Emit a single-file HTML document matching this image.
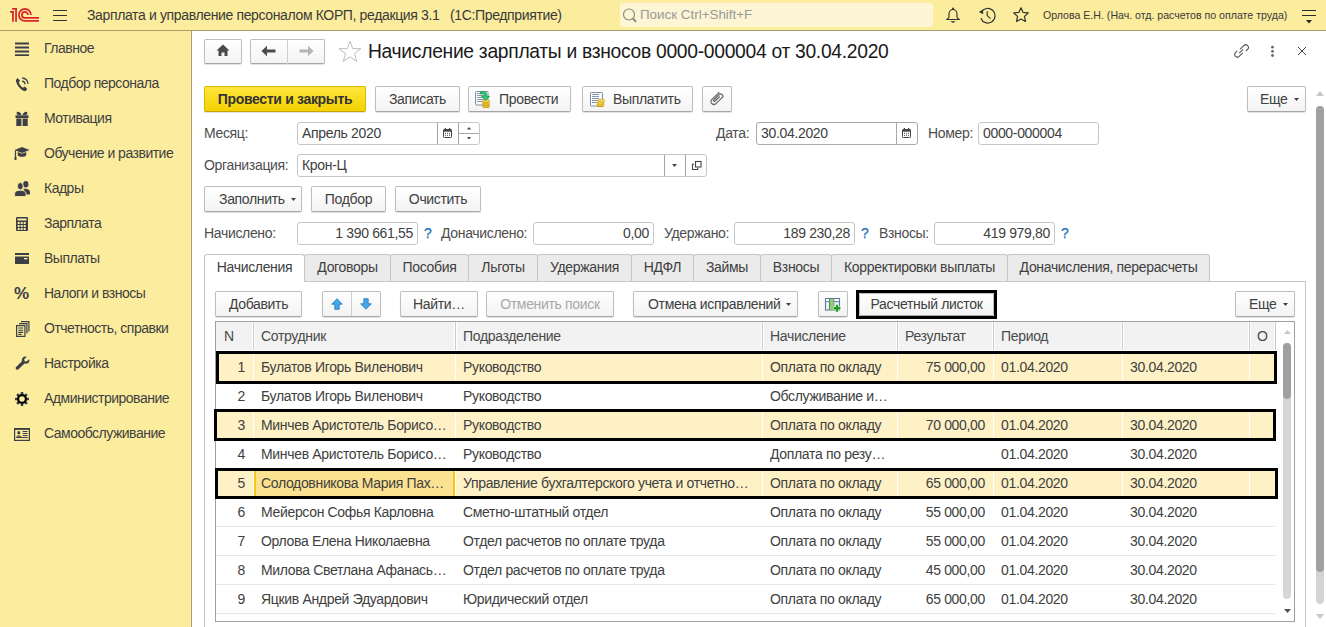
<!DOCTYPE html><html><head><meta charset="utf-8"><title>1C</title><style>
*{margin:0;padding:0;box-sizing:border-box}
html,body{width:1326px;height:627px;overflow:hidden}
body{position:relative;font-family:"Liberation Sans",sans-serif;font-size:14px;letter-spacing:-0.33px;color:#3d3d3d;background:#fff}
.a{position:absolute;white-space:nowrap}
#top{left:0;top:0;width:1326px;height:31px;background:#FBEC9E;border-bottom:1px solid #A89C6A}
#side{left:0;top:31px;width:192px;height:596px;background:#FBEC9E;border-right:1px solid #A89C6A}
#side:after{content:"";position:absolute;right:0;top:0;width:1px;height:100%;background:#FDF2B4}
.si{left:44px;height:20px;line-height:20px;color:#3f3f3f;letter-spacing:-0.5px}
.btn{position:absolute;height:26px;border:1px solid #BEBEBE;border-bottom-color:#A6A6A6;border-radius:2px;background:linear-gradient(#fff,#f3f3f3);box-shadow:0 1px 1px rgba(0,0,0,.12);text-align:center;line-height:24px;color:#404040;white-space:nowrap}
.yb{background:linear-gradient(#FFE63D,#F4D100);border-color:#D9B800;border-bottom-color:#C4A500;font-weight:bold;color:#333}
.inp{position:absolute;height:23px;border:1px solid #C6C6C6;border-radius:3px;background:#fff;line-height:21px;padding:0 4px;color:#404040;white-space:nowrap}
.lbl{position:absolute;height:23px;line-height:23px;color:#4d4d4d;white-space:nowrap}
.q{position:absolute;color:#1C6EBE;font-weight:normal;line-height:23px;font-size:14px;-webkit-text-stroke:0.25px #1C6EBE;letter-spacing:0}
.tab{position:absolute;top:254px;height:27px;border:1px solid #C6C6C6;border-bottom:none;border-radius:3px 3px 0 0;background:#EBEBEB;text-align:center;line-height:24px;color:#404040;white-space:nowrap}
.hd{position:absolute;top:322px;height:29px;line-height:29px;color:#4d4d4d;background:#F2F2F2;border-right:1px solid #DADADA;padding-left:8px;white-space:nowrap}
.cell{position:absolute;height:29px;line-height:29px;color:#404040;white-space:nowrap;overflow:hidden;padding-left:8px}
.r{text-align:right;padding-right:8px;padding-left:0}
.hl{position:absolute;border:3px solid #000}
.sep{position:absolute;height:1px;background:#E8E8E8}
</style></head><body>
<div id="top" class="a"></div>
<svg class="a" style="left:0px;top:0px" width="45" height="30" viewBox="0 0 45 30"><g fill="#D8232A">
<rect x="12.1" y="8" width="4.8" height="1.7"/><rect x="15.2" y="8" width="1.7" height="13.8"/><rect x="12.1" y="11" width="1.7" height="10.8"/><rect x="10" y="11" width="3.8" height="1.7"/></g>
<g fill="none" stroke="#D8232A" stroke-width="1.7">
<path d="M30.9 14.9 A6 6 0 1 0 24.9 20.9 H38.9"/>
<path d="M27.9 14.9 A3 3 0 1 0 24.9 17.9 H38.9"/>
</g></svg>
<div class="a" style="left:53px;top:10px;width:14px;height:1px;background:#333"></div>
<div class="a" style="left:53px;top:15px;width:14px;height:1px;background:#333"></div>
<div class="a" style="left:53px;top:20px;width:14px;height:1px;background:#333"></div>
<div class="a" style="left:87px;top:5px;height:20px;line-height:20px;color:#3a3a3a;font-size:14px;letter-spacing:-0.36px">Зарплата и управление персоналом КОРП, редакция 3.1 &nbsp; (1С:Предприятие)</div>
<div class="a" style="left:620px;top:3px;width:313px;height:24px;background:#FDF5D3;border-radius:3px"></div>
<svg class="a" style="left:622px;top:7px" width="16" height="17" viewBox="0 0 16 17"><circle cx="7" cy="7.5" r="5.5" fill="none" stroke="#8a8a80" stroke-width="1.2"/><path d="M11 11.5 L14 14.8" stroke="#8a8a80" stroke-width="2"/></svg>
<div class="a" style="left:640px;top:5px;height:20px;line-height:20px;color:#9a9a9a;font-size:13.4px;letter-spacing:0">Поиск Ctrl+Shift+F</div>
<svg class="a" style="left:945px;top:7px" width="16" height="17" viewBox="0 0 16 17"><circle cx="8" cy="1.4" r="1" fill="#333"/><path d="M4 10 V7.2 C4 4.4 5.8 2.4 8 2.4 C10.2 2.4 12 4.4 12 7.2 V10 C12 11.2 13.3 11.8 14.4 12.5 H1.6 C2.7 11.8 4 11.2 4 10Z" fill="none" stroke="#333" stroke-width="1.15" stroke-linejoin="round"/><path d="M5.2 14.2 H10.8 L8 16Z" fill="#333"/></svg>
<svg class="a" style="left:978px;top:7px" width="18" height="17" viewBox="0 0 18 17"><path d="M3.3 5.3 A7.3 7.3 0 1 1 2.9 11.2" fill="none" stroke="#333" stroke-width="1.2"/><path d="M0.8 5 L5.2 7.2 L5 2.6Z" fill="#333"/><path d="M9.2 4.2 V8.6 L12.5 11.6" fill="none" stroke="#333" stroke-width="1.2"/></svg>
<svg class="a" style="left:1013px;top:7px" width="16" height="16" viewBox="0 0 16 16"><path d="M8.00 0.70 L10.12 5.39 L15.23 5.95 L11.42 9.41 L12.47 14.45 L8.00 11.90 L3.53 14.45 L4.58 9.41 L0.77 5.95 L5.88 5.39Z" fill="none" stroke="#333" stroke-width="1.2" stroke-linejoin="round"/></svg>
<div class="a" style="left:1043px;top:5px;height:20px;line-height:20px;color:#3a3a3a;font-size:10.6px;letter-spacing:0">Орлова Е.Н. (Нач. отд. расчетов по оплате труда)</div>
<div class="a" style="left:1302px;top:10px;width:14px;height:1px;background:#2a2a2a"></div>
<div class="a" style="left:1302px;top:15px;width:14px;height:1px;background:#2a2a2a"></div>
<svg class="a" style="left:1306px;top:20px" width="6" height="4" viewBox="0 0 6 4"><path d="M0 0 H6 L3 3.5Z" fill="#2a2a2a"/></svg>
<div id="side" class="a"></div>
<div class="a si" style="top:38px">Главное</div>
<div class="a si" style="top:73px">Подбор персонала</div>
<div class="a si" style="top:108px">Мотивация</div>
<div class="a si" style="top:143px">Обучение и развитие</div>
<div class="a si" style="top:178px">Кадры</div>
<div class="a si" style="top:213px">Зарплата</div>
<div class="a si" style="top:248px">Выплаты</div>
<div class="a si" style="top:283px">Налоги и взносы</div>
<div class="a si" style="top:318px">Отчетность, справки</div>
<div class="a si" style="top:353px">Настройка</div>
<div class="a si" style="top:388px">Администрирование</div>
<div class="a si" style="top:423px">Самообслуживание</div>
<svg class="a" style="left:15px;top:42px" width="14" height="14"><rect x="0" y="0.5" width="14" height="2" fill="#3C3F48"/><rect x="0" y="4.5" width="14" height="2" fill="#3C3F48"/><rect x="0" y="8.5" width="14" height="2" fill="#3C3F48"/><rect x="0" y="12.3" width="14" height="2" fill="#3C3F48"/></svg>
<svg class="a" style="left:15px;top:77px" width="14" height="15" viewBox="0 0 14 15"><path d="M2.5 1 L5 3.5 L3.8 5.5 C4.5 7.5 6 9.5 8 10.8 L9.8 9.6 L12.3 12 L10.3 14.2 C6 13.5 1.5 8 0.8 3.2Z" fill="#3C3F48"/><path d="M7 4.2 A3.2 3.2 0 0 1 10 7.2" fill="none" stroke="#3C3F48" stroke-width="1.3"/><path d="M7.2 1 A6 6 0 0 1 13 7" fill="none" stroke="#3C3F48" stroke-width="1.3"/></svg>
<svg class="a" style="left:15px;top:111px" width="14" height="16" viewBox="0 0 14 16"><g fill="#3C3F48"><path d="M0.5 4.3 H13.5 V7 H0.5Z"/><path d="M1.3 7.6 H6.4 V15 H1.3Z M7.6 7.6 H12.7 V15 H7.6Z"/><path d="M6.5 4 C5.5 1.5 3.5 0.3 2.2 1 C1 1.7 1.5 3.5 3 4Z M7.5 4 C8.5 1.5 10.5 0.3 11.8 1 C13 1.7 12.5 3.5 11 4Z"/></g></svg>
<svg class="a" style="left:14px;top:146px" width="16" height="15" viewBox="0 0 16 15"><path d="M0.5 4 L8 1 L15.5 4 L8 7Z" fill="#3C3F48"/><path d="M3.8 6 V9.5 C5 11.3 11 11.3 12.2 9.5 V6 L8 7.8Z" fill="#3C3F48"/><path d="M1.5 4.5 V11.5" stroke="#3C3F48" stroke-width="1.2"/><rect x="0.5" y="11" width="2" height="3" fill="#3C3F48"/></svg>
<svg class="a" style="left:14px;top:180px" width="17" height="17" viewBox="0 0 17 17"><g fill="#3C3F48"><ellipse cx="11.8" cy="4.2" rx="2.6" ry="3.3"/><path d="M9.5 8.8 C12.5 8.2 16 9.3 16 12 V14.5 H11.5Z"/></g><g fill="#3C3F48" stroke="#FBEC9E" stroke-width="0.9"><ellipse cx="6.3" cy="6.2" rx="2.9" ry="3.6"/><path d="M0.6 16.5 V13.8 C0.6 11.2 3 10.3 6.3 10.3 C9.6 10.3 12 11.2 12 13.8 V16.5Z"/></g></svg>
<svg class="a" style="left:16px;top:217px" width="12" height="14" viewBox="0 0 12 14"><rect x="0" y="0" width="12" height="14" rx="1" fill="#3C3F48"/><rect x="1.5" y="1.5" width="9" height="2" fill="#FBEC9E"/><rect x="1.7" y="5" width="2" height="2" fill="#FBEC9E"/><rect x="1.7" y="8" width="2" height="2" fill="#FBEC9E"/><rect x="1.7" y="11" width="2" height="2" fill="#FBEC9E"/><rect x="4.7" y="5" width="2" height="2" fill="#FBEC9E"/><rect x="4.7" y="8" width="2" height="2" fill="#FBEC9E"/><rect x="4.7" y="11" width="2" height="2" fill="#FBEC9E"/><rect x="7.7" y="5" width="2" height="2" fill="#FBEC9E"/><rect x="7.7" y="8" width="2" height="2" fill="#FBEC9E"/><rect x="7.7" y="11" width="2" height="2" fill="#FBEC9E"/></svg>
<svg class="a" style="left:15px;top:253px" width="14" height="11" viewBox="0 0 14 11"><rect x="0" y="0" width="14" height="2" fill="#3C3F48"/><rect x="0" y="3.5" width="14" height="7.5" rx="0.5" fill="#3C3F48"/><rect x="9" y="5" width="3.5" height="1.3" fill="#FBEC9E"/></svg>
<div class="a" style="left:14px;top:285px;font-size:17px;font-weight:bold;color:#3C3F48;line-height:18px">%</div>
<svg class="a" style="left:16px;top:321px" width="14" height="16" viewBox="0 0 14 16"><path d="M5 0.6 H12.9 V10.5 M3 2.6 H10.9 V12.5" fill="none" stroke="#3C3F48" stroke-width="1.2"/><rect x="0.6" y="4.6" width="8.3" height="10.8" fill="#FBEC9E" stroke="#3C3F48" stroke-width="1.2"/><path d="M2.3 7 H7.2 M2.3 9.2 H7.2 M2.3 11.4 H7.2 M2.3 13.4 H5.5" stroke="#3C3F48" stroke-width="1.1"/></svg>
<svg class="a" style="left:15px;top:356px" width="15" height="15" viewBox="0 0 15 15"><path d="M14.2 3.2 L11.6 5.6 L9.6 5.2 L9.2 3.3 L11.8 0.8 C9 -0.2 6.2 2 6.9 5.2 L0.9 11.2 C-0.1 12.3 2 14.6 3.2 13.5 L9.6 7.6 C12.6 8.4 15.2 6 14.2 3.2Z" fill="#3C3F48"/></svg>
<svg class="a" style="left:14px;top:391px" width="16" height="16" viewBox="0 0 16 16"><g fill="#3C3F48"><rect x="6.7" y="1" width="2.6" height="14" rx="0.4" transform="rotate(0 8 8)"/><rect x="6.7" y="1" width="2.6" height="14" rx="0.4" transform="rotate(45 8 8)"/><rect x="6.7" y="1" width="2.6" height="14" rx="0.4" transform="rotate(90 8 8)"/><rect x="6.7" y="1" width="2.6" height="14" rx="0.4" transform="rotate(135 8 8)"/></g><circle cx="8" cy="8" r="5" fill="{IC}"/><circle cx="8" cy="8" r="2.8" fill="#FBEC9E"/></svg>
<svg class="a" style="left:14px;top:428px" width="16" height="13" viewBox="0 0 16 13"><rect x="0.6" y="0.8" width="14.8" height="11.6" fill="none" stroke="#3C3F48" stroke-width="1.2"/><rect x="0" y="0" width="16" height="1.8" fill="#3C3F48"/><ellipse cx="4.8" cy="4.8" rx="1.5" ry="1.8" fill="#3C3F48"/><path d="M2.3 8.8 C2.3 6.9 7.3 6.9 7.3 8.8Z" fill="#3C3F48"/><path d="M8.6 3.5 H13.5 M8.6 5.5 H13.5 M8.6 7.5 H13.5 M2.2 9.5 H13.8" stroke="#3C3F48" stroke-width="1"/></svg>
<div class="btn" style="left:204px;top:39px;width:38px;height:25px"></div>
<svg class="a" style="left:216px;top:44px" width="14" height="13" viewBox="0 0 14 13"><path d="M7 0.5 L13.5 6.5 H11.5 V12 H8.5 V8.5 H5.5 V12 H2.5 V6.5 H0.5Z" fill="#4a4a4a"/></svg>
<div class="btn" style="left:250px;top:39px;width:75px;height:25px"></div>
<div class="a" style="left:287px;top:40px;width:1px;height:24px;background:#CFCFCF"></div>
<svg class="a" style="left:261px;top:45px" width="15" height="12" viewBox="0 0 15 12"><path d="M0.5 6 L6 0.8 V4.5 H14.5 V7.5 H6 V11.2Z" fill="#4a4a4a"/></svg>
<svg class="a" style="left:299px;top:45px" width="15" height="12" viewBox="0 0 15 12"><path d="M14.5 6 L9 0.8 V4.5 H0.5 V7.5 H9 V11.2Z" fill="#b5b5b5"/></svg>
<svg class="a" style="left:338px;top:40px" width="24" height="23" viewBox="0 0 24 23"><path d="M12 1.2 L14.7 8.6 L22.8 8.7 L16.4 13.6 L18.7 21.4 L12 16.8 L5.3 21.4 L7.6 13.6 L1.2 8.7 L9.3 8.6Z" fill="none" stroke="#B4BBC4" stroke-width="0.95"/></svg>
<div class="a" style="left:368px;top:40px;height:24px;line-height:24px;font-size:19.3px;letter-spacing:-0.3px;color:#1a1a1a">Начисление зарплаты и взносов 0000-000004 от 30.04.2020</div>
<svg class="a" style="left:1233px;top:43px" width="17" height="16" viewBox="0 0 17 16"><g fill="none" stroke="#555" stroke-width="1.1"><path d="M7.2 6.2 L10.8 2.6 C11.8 1.6 13.6 1.6 14.6 2.6 C15.6 3.6 15.6 5.4 14.6 6.4 L12.8 8.2"/><path d="M9.8 9.8 L6.2 13.4 C5.2 14.4 3.4 14.4 2.4 13.4 C1.4 12.4 1.4 10.6 2.4 9.6 L4.2 7.8"/><path d="M6.2 10.2 L10 6.4"/></g></svg>
<svg class="a" style="left:1269px;top:44px" width="7" height="15" viewBox="0 0 7 15"><g fill="#666"><circle cx="3.5" cy="3.2" r="1.4"/><circle cx="3.5" cy="7.4" r="1.4"/><circle cx="3.5" cy="11.5" r="1.4"/></g></svg>
<svg class="a" style="left:1297px;top:46px" width="10" height="10" viewBox="0 0 10 10"><path d="M1 1 L9 9 M9 1 L1 9" stroke="#444" stroke-width="1"/></svg>
<div class="btn yb" style="left:204px;top:86px;width:162px">Провести и закрыть</div>
<div class="btn" style="left:375px;top:86px;width:85px">Записать</div>
<div class="btn" style="left:468px;top:86px;width:103px;text-align:left;padding-left:30px">Провести</div>
<div class="btn" style="left:582px;top:86px;width:111px;text-align:left;padding-left:30px">Выплатить</div>
<div class="btn" style="left:702px;top:86px;width:30px"></div>
<div class="btn" style="left:1247px;top:86px;width:59px;text-align:left;padding-left:12px">Еще</div>
<svg class="a" style="left:474px;top:90px" width="18" height="18" viewBox="0 0 18 18"><rect x="1.5" y="1.5" width="12.5" height="13.5" rx="0.8" fill="#FAFBFD" stroke="#7C8DA8" stroke-width="1"/><path d="M3 3.5 H10.5" stroke="#8A96AA" stroke-width="1"/><path d="M3 5.5 H10.5" stroke="#8A96AA" stroke-width="1"/><path d="M3 7.5 H10.5" stroke="#8A96AA" stroke-width="1"/><path d="M3 9.5 H10.5" stroke="#8A96AA" stroke-width="1"/><path d="M3 11.5 H10.5" stroke="#8A96AA" stroke-width="1"/><ellipse cx="12" cy="16.5" rx="3.6" ry="1.5" fill="#C99A10"/><ellipse cx="12" cy="15.7" rx="3.6" ry="1.5" fill="#F5D547" stroke="#B88A0A" stroke-width="0.5"/><ellipse cx="12" cy="14.3" rx="3.6" ry="1.5" fill="#C99A10"/><ellipse cx="12" cy="13.5" rx="3.6" ry="1.5" fill="#F5D547" stroke="#B88A0A" stroke-width="0.5"/><ellipse cx="12" cy="12.1" rx="3.6" ry="1.5" fill="#C99A10"/><ellipse cx="12" cy="11.299999999999999" rx="3.6" ry="1.5" fill="#F5D547" stroke="#B88A0A" stroke-width="0.5"/><path d="M6.5 1.8 H9.8 C11.8 1.8 12.6 3.2 12.6 5 V6.3 H15.6 L11.6 10.3 L7.6 6.3 H10.6 V5.2 C10.6 4.5 10.2 4 9.5 4 H6.5Z" fill="#30D07A" stroke="#12994A" stroke-width="0.8" stroke-linejoin="round"/></svg>
<svg class="a" style="left:589px;top:91px" width="18" height="18" viewBox="0 0 18 18"><rect x="1.5" y="1.5" width="12" height="13.5" rx="0.8" fill="#FAFBFD" stroke="#7C8DA8" stroke-width="1"/><path d="M3 3.5 H10" stroke="#8A96AA" stroke-width="1"/><path d="M3 5.5 H10" stroke="#8A96AA" stroke-width="1"/><path d="M3 7.5 H10" stroke="#8A96AA" stroke-width="1"/><path d="M3 9.5 H10" stroke="#8A96AA" stroke-width="1"/><path d="M3 11.5 H10" stroke="#8A96AA" stroke-width="1"/><ellipse cx="11.5" cy="14.5" rx="3.6" ry="1.6" fill="#C99A10"/><ellipse cx="11.5" cy="13.6" rx="3.6" ry="1.6" fill="#F5D547" stroke="#B88A0A" stroke-width="0.5"/><ellipse cx="11.5" cy="11.8" rx="3.6" ry="1.6" fill="#F5D547" stroke="#B88A0A" stroke-width="0.5"/><ellipse cx="12.5" cy="9.6" rx="3.4" ry="1.5" fill="#F8DC55" stroke="#B88A0A" stroke-width="0.5"/></svg>
<svg class="a" style="left:704px;top:88px" width="22" height="20" viewBox="0 0 22 20"><path d="M15.1 4.4 L7.9 11.4 A2.7 2.7 0 0 0 11.9 15.6 L18.2 9.6 A2.1 2.1 0 0 0 15.2 6.5 L9.6 12 A0.9 0.9 0 0 0 10.9 13.2 L15.5 8.8" fill="none" stroke="#666" stroke-width="1.2" stroke-linecap="round"/></svg>
<svg class="a" style="left:1294px;top:98px" width="5" height="3" viewBox="0 0 5 3"><path d="M0 0 H5 L2.5 3Z" fill="#404040"/></svg>
<div class="lbl" style="left:204px;top:122px">Месяц:</div>
<div class="inp" style="left:297px;top:122px;width:183px">Апрель 2020</div>
<div class="a" style="left:437px;top:123px;width:1px;height:21px;background:#A6A6A6"></div>
<div class="a" style="left:458px;top:123px;width:1px;height:21px;background:#A6A6A6"></div>
<div class="a" style="left:459px;top:133px;width:20px;height:1px;background:#A6A6A6"></div>
<svg class="a" style="left:443px;top:128px" width="9" height="10" viewBox="0 0 9 10"><rect x="0.5" y="1.5" width="8" height="8" rx="0.8" fill="none" stroke="#444" stroke-width="1"/><rect x="0.5" y="1.5" width="8" height="2.2" fill="#444"/><rect x="1.8" y="0" width="1.2" height="2" fill="#444"/><rect x="6" y="0" width="1.2" height="2" fill="#444"/><rect x="2" y="4.8" width="1" height="1" fill="#444"/><rect x="2" y="6.8" width="1" height="1" fill="#444"/><rect x="4" y="4.8" width="1" height="1" fill="#444"/><rect x="4" y="6.8" width="1" height="1" fill="#444"/><rect x="6" y="4.8" width="1" height="1" fill="#444"/><rect x="6" y="6.8" width="1" height="1" fill="#444"/></svg>
<svg class="a" style="left:467px;top:127px" width="4" height="3" viewBox="0 0 4 3"><path d="M0 2.5 H4 L2 0Z" fill="#444"/></svg>
<svg class="a" style="left:467px;top:137px" width="4" height="3" viewBox="0 0 4 3"><path d="M0 0 H4 L2 2.5Z" fill="#444"/></svg>
<div class="lbl" style="left:716px;top:122px">Дата:</div>
<div class="inp" style="left:756px;top:122px;width:162px;border-color:#A9A9A9">30.04.2020</div>
<div class="a" style="left:896px;top:123px;width:1px;height:21px;background:#A9A9A9"></div>
<svg class="a" style="left:902px;top:128px" width="9" height="10" viewBox="0 0 9 10"><rect x="0.5" y="1.5" width="8" height="8" rx="0.8" fill="none" stroke="#444" stroke-width="1"/><rect x="0.5" y="1.5" width="8" height="2.2" fill="#444"/><rect x="1.8" y="0" width="1.2" height="2" fill="#444"/><rect x="6" y="0" width="1.2" height="2" fill="#444"/><rect x="2" y="4.8" width="1" height="1" fill="#444"/><rect x="2" y="6.8" width="1" height="1" fill="#444"/><rect x="4" y="4.8" width="1" height="1" fill="#444"/><rect x="4" y="6.8" width="1" height="1" fill="#444"/><rect x="6" y="4.8" width="1" height="1" fill="#444"/><rect x="6" y="6.8" width="1" height="1" fill="#444"/></svg>
<div class="lbl" style="left:928px;top:122px">Номер:</div>
<div class="inp" style="left:978px;top:122px;width:121px">0000-000004</div>
<div class="lbl" style="left:204px;top:154px">Организация:</div>
<div class="inp" style="left:297px;top:154px;width:410px">Крон-Ц</div>
<div class="a" style="left:664px;top:155px;width:1px;height:21px;background:#A6A6A6"></div>
<div class="a" style="left:685px;top:155px;width:1px;height:21px;background:#A6A6A6"></div>
<svg class="a" style="left:672px;top:164px" width="5" height="3" viewBox="0 0 5 3"><path d="M0 0 H5 L2.5 3Z" fill="#444"/></svg>
<svg class="a" style="left:691px;top:160px" width="11" height="11" viewBox="0 0 11 11"><rect x="4.5" y="1.5" width="5.5" height="5.5" fill="none" stroke="#444" stroke-width="1.1"/><path d="M3 4.3 H1.5 V9.5 H6.7 V8" fill="none" stroke="#444" stroke-width="1.1"/></svg>
<div class="btn" style="left:204px;top:186px;width:98px;text-align:left;padding-left:14px">Заполнить</div>
<svg class="a" style="left:291px;top:198px" width="5" height="3" viewBox="0 0 5 3"><path d="M0 0 H5 L2.5 3Z" fill="#404040"/></svg>
<div class="btn" style="left:311px;top:186px;width:75px">Подбор</div>
<div class="btn" style="left:395px;top:186px;width:86px">Очистить</div>
<div class="lbl" style="left:204px;top:222px">Начислено:</div>
<div class="inp" style="left:297px;top:222px;width:121px;text-align:right">1 390 661,55</div>
<div class="q" style="left:424px;top:222px">?</div>
<div class="lbl" style="left:441px;top:222px">Доначислено:</div>
<div class="inp" style="left:533px;top:222px;width:121px;text-align:right">0,00</div>
<div class="lbl" style="left:664px;top:222px">Удержано:</div>
<div class="inp" style="left:734px;top:222px;width:121px;text-align:right">189 230,28</div>
<div class="q" style="left:861px;top:222px">?</div>
<div class="lbl" style="left:879px;top:222px">Взносы:</div>
<div class="inp" style="left:934px;top:222px;width:121px;text-align:right">419 979,80</div>
<div class="q" style="left:1061px;top:222px">?</div>
<div class="a" style="left:204px;top:281px;width:1102px;height:346px;border:1px solid #C6C6C6;border-bottom:none"></div>
<div class="tab" style="left:304px;width:87px">Договоры</div>
<div class="tab" style="left:390px;width:79px">Пособия</div>
<div class="tab" style="left:468px;width:70px">Льготы</div>
<div class="tab" style="left:537px;width:95px">Удержания</div>
<div class="tab" style="left:631px;width:63px">НДФЛ</div>
<div class="tab" style="left:693px;width:68px">Займы</div>
<div class="tab" style="left:760px;width:72px">Взносы</div>
<div class="tab" style="left:831px;width:177px">Корректировки выплаты</div>
<div class="tab" style="left:1007px;width:203px">Доначисления, перерасчеты</div>
<div class="tab" style="left:204px;width:101px;background:#fff;height:28px">Начисления</div>
<div class="btn" style="left:215px;top:291px;width:87px">Добавить</div>
<div class="btn" style="left:322px;top:291px;width:59px"></div>
<div class="a" style="left:351px;top:292px;width:1px;height:24px;background:#CFCFCF"></div>
<svg class="a" style="left:331px;top:298px" width="12" height="12" viewBox="0 0 12 12"><path d="M6 0.7 L11.3 6.2 H8.2 V11.3 H3.8 V6.2 H0.7Z" fill="#45A6EA" stroke="#1F73B8" stroke-width="0.8" stroke-linejoin="round"/></svg>
<svg class="a" style="left:360px;top:298px" width="12" height="12" viewBox="0 0 12 12"><path d="M6 11.3 L11.3 5.8 H8.2 V0.7 H3.8 V5.8 H0.7Z" fill="#45A6EA" stroke="#1F73B8" stroke-width="0.8" stroke-linejoin="round"/></svg>
<div class="btn" style="left:400px;top:291px;width:78px">Найти…</div>
<div class="btn" style="left:486px;top:291px;width:128px;color:#a8a8a8">Отменить поиск</div>
<div class="btn" style="left:633px;top:291px;width:165px;text-align:left;padding-left:14px">Отмена исправлений</div>
<svg class="a" style="left:786px;top:303px" width="5" height="3" viewBox="0 0 5 3"><path d="M0 0 H5 L2.5 3Z" fill="#404040"/></svg>
<div class="btn" style="left:818px;top:291px;width:30px"></div>
<svg class="a" style="left:824px;top:297px" width="18" height="17" viewBox="0 0 18 17"><rect x="1.5" y="1.5" width="14" height="11.5" fill="#EAF2FA" stroke="#5F7D95" stroke-width="1.1"/><rect x="2" y="2" width="13" height="2.3" fill="#fff"/><path d="M1.5 4.6 H15.5 M5.5 1.5 V13 M9.8 1.5 V13" stroke="#5F7D95" stroke-width="1"/><rect x="6" y="2" width="3.3" height="10.5" fill="#8ED25A"/><path d="M9.3 11.2 H16.8 M13 7.4 V15.2" stroke="#fff" stroke-width="3.6"/><path d="M9.6 11.2 H16.4 M13 7.8 V14.8" stroke="#1F9A22" stroke-width="2.4"/></svg>
<div class="btn" style="left:859px;top:293px;width:135px;height:23px;line-height:21px">Расчетный листок</div>
<div class="hl" style="left:856px;top:290px;width:141px;height:29px"></div>
<div class="btn" style="left:1235px;top:291px;width:60px;text-align:left;padding-left:13px">Еще</div>
<svg class="a" style="left:1283px;top:303px" width="5" height="3" viewBox="0 0 5 3"><path d="M0 0 H5 L2.5 3Z" fill="#404040"/></svg>
<div class="a" style="left:215px;top:321px;width:1080px;height:301px;border:1px solid #A0A0A0;background:#fff"></div>
<div class="a" style="left:216px;top:322px;width:1059px;height:28px;background:#F2F2F2"></div>
<div class="a" style="left:224px;top:322px;height:28px;line-height:28px;color:#4a4a4a">N</div>
<div class="a" style="left:261px;top:322px;height:28px;line-height:28px;color:#4a4a4a">Сотрудник</div>
<div class="a" style="left:463px;top:322px;height:28px;line-height:28px;color:#4a4a4a">Подразделение</div>
<div class="a" style="left:770px;top:322px;height:28px;line-height:28px;color:#4a4a4a">Начисление</div>
<div class="a" style="left:905px;top:322px;height:28px;line-height:28px;color:#4a4a4a">Результат</div>
<div class="a" style="left:1001px;top:322px;height:28px;line-height:28px;color:#4a4a4a">Период</div>
<div class="a" style="left:1257px;top:322px;height:28px;line-height:28px;color:#4a4a4a">О</div>
<div class="a" style="left:252px;top:322px;width:3px;height:28px;background:#fff"></div>
<div class="a" style="left:253px;top:322px;width:1px;height:28px;background:#CACACA"></div>
<div class="a" style="left:454px;top:322px;width:3px;height:28px;background:#fff"></div>
<div class="a" style="left:455px;top:322px;width:1px;height:28px;background:#CACACA"></div>
<div class="a" style="left:761px;top:322px;width:3px;height:28px;background:#fff"></div>
<div class="a" style="left:762px;top:322px;width:1px;height:28px;background:#CACACA"></div>
<div class="a" style="left:896px;top:322px;width:3px;height:28px;background:#fff"></div>
<div class="a" style="left:897px;top:322px;width:1px;height:28px;background:#CACACA"></div>
<div class="a" style="left:992px;top:322px;width:3px;height:28px;background:#fff"></div>
<div class="a" style="left:993px;top:322px;width:1px;height:28px;background:#CACACA"></div>
<div class="a" style="left:1121px;top:322px;width:3px;height:28px;background:#fff"></div>
<div class="a" style="left:1122px;top:322px;width:1px;height:28px;background:#CACACA"></div>
<div class="a" style="left:1248px;top:322px;width:3px;height:28px;background:#fff"></div>
<div class="a" style="left:1249px;top:322px;width:1px;height:28px;background:#CACACA"></div>
<div class="a" style="left:1274px;top:322px;width:3px;height:28px;background:#fff"></div>
<div class="a" style="left:1275px;top:322px;width:1px;height:28px;background:#CACACA"></div>
<div class="sep" style="left:216px;top:381px;width:1059px"></div>
<div class="sep" style="left:216px;top:410px;width:1059px"></div>
<div class="sep" style="left:216px;top:439px;width:1059px"></div>
<div class="sep" style="left:216px;top:468px;width:1059px"></div>
<div class="sep" style="left:216px;top:497px;width:1059px"></div>
<div class="sep" style="left:216px;top:526px;width:1059px"></div>
<div class="sep" style="left:216px;top:555px;width:1059px"></div>
<div class="sep" style="left:216px;top:584px;width:1059px"></div>
<div class="sep" style="left:216px;top:613px;width:1059px"></div>
<div class="sep" style="left:216px;top:642px;width:1059px"></div>
<div class="a" style="left:216px;top:352px;width:1059px;height:30px;background:#FEF1C6"></div>
<div class="a" style="left:253px;top:352px;width:1px;height:30px;background:#fff"></div>
<div class="a" style="left:455px;top:352px;width:1px;height:30px;background:#fff"></div>
<div class="a" style="left:762px;top:352px;width:1px;height:30px;background:#fff"></div>
<div class="a" style="left:897px;top:352px;width:1px;height:30px;background:#fff"></div>
<div class="a" style="left:993px;top:352px;width:1px;height:30px;background:#fff"></div>
<div class="a" style="left:1122px;top:352px;width:1px;height:30px;background:#fff"></div>
<div class="a" style="left:1249px;top:352px;width:1px;height:30px;background:#fff"></div>
<div class="a" style="left:216px;top:353px;width:29px;height:28px;line-height:28px;text-align:right;color:#404040">1</div>
<div class="a" style="left:261px;top:353px;width:192px;height:28px;line-height:28px;overflow:hidden;color:#404040">Булатов Игорь Виленович</div>
<div class="a" style="left:463px;top:353px;width:297px;height:28px;line-height:28px;overflow:hidden;color:#404040">Руководство</div>
<div class="a" style="left:770px;top:353px;width:125px;height:28px;line-height:28px;overflow:hidden;color:#404040">Оплата по окладу</div>
<div class="a" style="left:897px;top:353px;width:88px;height:28px;line-height:28px;text-align:right;color:#404040">75 000,00</div>
<div class="a" style="left:1001px;top:353px;width:119px;height:28px;line-height:28px;overflow:hidden;color:#404040">01.04.2020</div>
<div class="a" style="left:1130px;top:353px;width:117px;height:28px;line-height:28px;overflow:hidden;color:#404040">30.04.2020</div>
<div class="a" style="left:216px;top:382px;width:29px;height:28px;line-height:28px;text-align:right;color:#404040">2</div>
<div class="a" style="left:261px;top:382px;width:192px;height:28px;line-height:28px;overflow:hidden;color:#404040">Булатов Игорь Виленович</div>
<div class="a" style="left:463px;top:382px;width:297px;height:28px;line-height:28px;overflow:hidden;color:#404040">Руководство</div>
<div class="a" style="left:770px;top:382px;width:125px;height:28px;line-height:28px;overflow:hidden;color:#404040">Обслуживание и…</div>
<div class="a" style="left:216px;top:410px;width:1059px;height:30px;background:#FEF1C6"></div>
<div class="a" style="left:253px;top:410px;width:1px;height:30px;background:#fff"></div>
<div class="a" style="left:455px;top:410px;width:1px;height:30px;background:#fff"></div>
<div class="a" style="left:762px;top:410px;width:1px;height:30px;background:#fff"></div>
<div class="a" style="left:897px;top:410px;width:1px;height:30px;background:#fff"></div>
<div class="a" style="left:993px;top:410px;width:1px;height:30px;background:#fff"></div>
<div class="a" style="left:1122px;top:410px;width:1px;height:30px;background:#fff"></div>
<div class="a" style="left:1249px;top:410px;width:1px;height:30px;background:#fff"></div>
<div class="a" style="left:216px;top:411px;width:29px;height:28px;line-height:28px;text-align:right;color:#404040">3</div>
<div class="a" style="left:261px;top:411px;width:192px;height:28px;line-height:28px;overflow:hidden;color:#404040">Минчев Аристотель Борисо…</div>
<div class="a" style="left:463px;top:411px;width:297px;height:28px;line-height:28px;overflow:hidden;color:#404040">Руководство</div>
<div class="a" style="left:770px;top:411px;width:125px;height:28px;line-height:28px;overflow:hidden;color:#404040">Оплата по окладу</div>
<div class="a" style="left:897px;top:411px;width:88px;height:28px;line-height:28px;text-align:right;color:#404040">70 000,00</div>
<div class="a" style="left:1001px;top:411px;width:119px;height:28px;line-height:28px;overflow:hidden;color:#404040">01.04.2020</div>
<div class="a" style="left:1130px;top:411px;width:117px;height:28px;line-height:28px;overflow:hidden;color:#404040">30.04.2020</div>
<div class="a" style="left:216px;top:440px;width:29px;height:28px;line-height:28px;text-align:right;color:#404040">4</div>
<div class="a" style="left:261px;top:440px;width:192px;height:28px;line-height:28px;overflow:hidden;color:#404040">Минчев Аристотель Борисо…</div>
<div class="a" style="left:463px;top:440px;width:297px;height:28px;line-height:28px;overflow:hidden;color:#404040">Руководство</div>
<div class="a" style="left:770px;top:440px;width:125px;height:28px;line-height:28px;overflow:hidden;color:#404040">Доплата по резу…</div>
<div class="a" style="left:1001px;top:440px;width:119px;height:28px;line-height:28px;overflow:hidden;color:#404040">01.04.2020</div>
<div class="a" style="left:1130px;top:440px;width:117px;height:28px;line-height:28px;overflow:hidden;color:#404040">30.04.2020</div>
<div class="a" style="left:216px;top:468px;width:1059px;height:30px;background:#FEF1C6"></div>
<div class="a" style="left:253px;top:468px;width:1px;height:30px;background:#fff"></div>
<div class="a" style="left:455px;top:468px;width:1px;height:30px;background:#fff"></div>
<div class="a" style="left:762px;top:468px;width:1px;height:30px;background:#fff"></div>
<div class="a" style="left:897px;top:468px;width:1px;height:30px;background:#fff"></div>
<div class="a" style="left:993px;top:468px;width:1px;height:30px;background:#fff"></div>
<div class="a" style="left:1122px;top:468px;width:1px;height:30px;background:#fff"></div>
<div class="a" style="left:1249px;top:468px;width:1px;height:30px;background:#fff"></div>
<div class="a" style="left:254px;top:468px;width:201px;height:30px;background:#FBE291;border:2px solid #F5C518"></div>
<div class="a" style="left:216px;top:469px;width:29px;height:28px;line-height:28px;text-align:right;color:#404040">5</div>
<div class="a" style="left:261px;top:469px;width:192px;height:28px;line-height:28px;overflow:hidden;color:#404040">Солодовникова Мария Пах…</div>
<div class="a" style="left:463px;top:469px;width:297px;height:28px;line-height:28px;overflow:hidden;color:#404040">Управление бухгалтерского учета и отчетно…</div>
<div class="a" style="left:770px;top:469px;width:125px;height:28px;line-height:28px;overflow:hidden;color:#404040">Оплата по окладу</div>
<div class="a" style="left:897px;top:469px;width:88px;height:28px;line-height:28px;text-align:right;color:#404040">65 000,00</div>
<div class="a" style="left:1001px;top:469px;width:119px;height:28px;line-height:28px;overflow:hidden;color:#404040">01.04.2020</div>
<div class="a" style="left:1130px;top:469px;width:117px;height:28px;line-height:28px;overflow:hidden;color:#404040">30.04.2020</div>
<div class="a" style="left:216px;top:498px;width:29px;height:28px;line-height:28px;text-align:right;color:#404040">6</div>
<div class="a" style="left:261px;top:498px;width:192px;height:28px;line-height:28px;overflow:hidden;color:#404040">Мейерсон Софья Карловна</div>
<div class="a" style="left:463px;top:498px;width:297px;height:28px;line-height:28px;overflow:hidden;color:#404040">Сметно-штатный отдел</div>
<div class="a" style="left:770px;top:498px;width:125px;height:28px;line-height:28px;overflow:hidden;color:#404040">Оплата по окладу</div>
<div class="a" style="left:897px;top:498px;width:88px;height:28px;line-height:28px;text-align:right;color:#404040">55 000,00</div>
<div class="a" style="left:1001px;top:498px;width:119px;height:28px;line-height:28px;overflow:hidden;color:#404040">01.04.2020</div>
<div class="a" style="left:1130px;top:498px;width:117px;height:28px;line-height:28px;overflow:hidden;color:#404040">30.04.2020</div>
<div class="a" style="left:216px;top:527px;width:29px;height:28px;line-height:28px;text-align:right;color:#404040">7</div>
<div class="a" style="left:261px;top:527px;width:192px;height:28px;line-height:28px;overflow:hidden;color:#404040">Орлова Елена Николаевна</div>
<div class="a" style="left:463px;top:527px;width:297px;height:28px;line-height:28px;overflow:hidden;color:#404040">Отдел расчетов по оплате труда</div>
<div class="a" style="left:770px;top:527px;width:125px;height:28px;line-height:28px;overflow:hidden;color:#404040">Оплата по окладу</div>
<div class="a" style="left:897px;top:527px;width:88px;height:28px;line-height:28px;text-align:right;color:#404040">55 000,00</div>
<div class="a" style="left:1001px;top:527px;width:119px;height:28px;line-height:28px;overflow:hidden;color:#404040">01.04.2020</div>
<div class="a" style="left:1130px;top:527px;width:117px;height:28px;line-height:28px;overflow:hidden;color:#404040">30.04.2020</div>
<div class="a" style="left:216px;top:556px;width:29px;height:28px;line-height:28px;text-align:right;color:#404040">8</div>
<div class="a" style="left:261px;top:556px;width:192px;height:28px;line-height:28px;overflow:hidden;color:#404040">Милова Светлана Афанась…</div>
<div class="a" style="left:463px;top:556px;width:297px;height:28px;line-height:28px;overflow:hidden;color:#404040">Отдел расчетов по оплате труда</div>
<div class="a" style="left:770px;top:556px;width:125px;height:28px;line-height:28px;overflow:hidden;color:#404040">Оплата по окладу</div>
<div class="a" style="left:897px;top:556px;width:88px;height:28px;line-height:28px;text-align:right;color:#404040">45 000,00</div>
<div class="a" style="left:1001px;top:556px;width:119px;height:28px;line-height:28px;overflow:hidden;color:#404040">01.04.2020</div>
<div class="a" style="left:1130px;top:556px;width:117px;height:28px;line-height:28px;overflow:hidden;color:#404040">30.04.2020</div>
<div class="a" style="left:216px;top:585px;width:29px;height:28px;line-height:28px;text-align:right;color:#404040">9</div>
<div class="a" style="left:261px;top:585px;width:192px;height:28px;line-height:28px;overflow:hidden;color:#404040">Яцкив Андрей Эдуардович</div>
<div class="a" style="left:463px;top:585px;width:297px;height:28px;line-height:28px;overflow:hidden;color:#404040">Юридический отдел</div>
<div class="a" style="left:770px;top:585px;width:125px;height:28px;line-height:28px;overflow:hidden;color:#404040">Оплата по окладу</div>
<div class="a" style="left:897px;top:585px;width:88px;height:28px;line-height:28px;text-align:right;color:#404040">65 000,00</div>
<div class="a" style="left:1001px;top:585px;width:119px;height:28px;line-height:28px;overflow:hidden;color:#404040">01.04.2020</div>
<div class="a" style="left:1130px;top:585px;width:117px;height:28px;line-height:28px;overflow:hidden;color:#404040">30.04.2020</div>
<div class="hl" style="left:216px;top:351px;width:1061px;height:33px"></div>
<div class="hl" style="left:214px;top:409px;width:1062px;height:32px"></div>
<div class="hl" style="left:215px;top:468px;width:1063px;height:31px"></div>
<svg class="a" style="left:1284px;top:330px" width="7" height="4"><path d="M0 4 H7 L3.5 0Z" fill="#c8c8c8"/></svg>
<div class="a" style="left:1283px;top:343px;width:8px;height:256px;border-radius:4px;background:#D6D6D6"></div>
<div class="a" style="left:1283px;top:343px;width:8px;height:56px;border-radius:4px;background:#A0A0A0"></div>
<svg class="a" style="left:1284px;top:609px" width="7" height="4"><path d="M0 0 H7 L3.5 4Z" fill="#505050"/></svg>
<svg class="a" style="left:1316px;top:91px" width="8" height="5"><path d="M0 5 H8 L4 0Z" fill="#c8c8c8"/></svg>
<div class="a" style="left:1316px;top:106px;width:8px;height:498px;border-radius:4px;background:#D4D4D4"></div>
<div class="a" style="left:1316px;top:106px;width:8px;height:466px;border-radius:4px;background:#A0A0A0"></div>
<svg class="a" style="left:1316px;top:614px" width="8" height="5"><path d="M0 0 H8 L4 5Z" fill="#c8c8c8"/></svg>
</body></html>
